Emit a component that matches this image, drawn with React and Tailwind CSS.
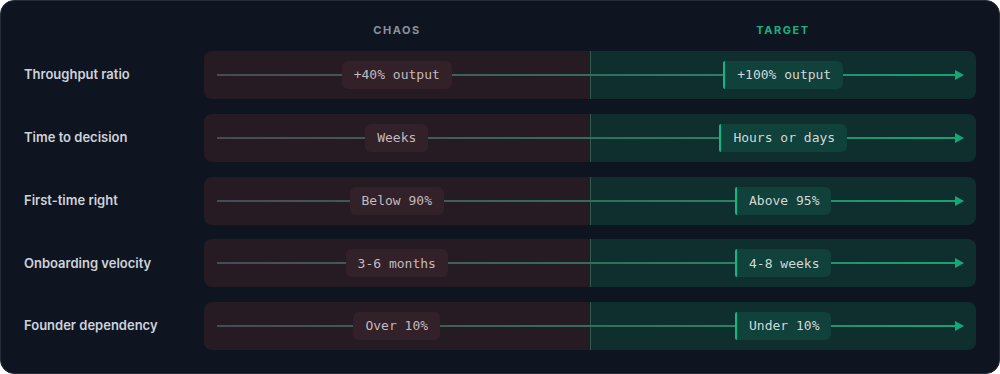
import React from 'react';

const rows = [
  { label: 'Throughput ratio', chaos: '+40% output', target: '+100% output' },
  { label: 'Time to decision', chaos: 'Weeks', target: 'Hours or days' },
  { label: 'First-time right', chaos: 'Below 90%', target: 'Above 95%' },
  { label: 'Onboarding velocity', chaos: '3-6 months', target: '4-8 weeks' },
  { label: 'Founder dependency', chaos: 'Over 10%', target: 'Under 10%' },
];

const mono = "font-['DejaVu_Sans_Mono','Liberation_Mono',monospace]";

const Row = ({ label, chaos, target }) => (
  <div className="grid h-12 grid-cols-[180px_1fr] items-center">
    <div className="text-[13px] font-semibold text-[#cdd2da]">{label}</div>
    <div className="relative flex h-full overflow-hidden rounded-lg">
      <div className="flex flex-1 items-center justify-center bg-[#261b22]" />
      <div className="flex flex-1 items-center justify-center border-l border-[#2c5a50] bg-[#0f2f2e]" />

      {/* track line + arrow */}
      <div className="absolute left-[13px] right-[16px] top-1/2 h-[2px] -translate-y-1/2 bg-gradient-to-r from-[#474b53] via-[#2f6e5c] to-[#12a474]" />
      <svg className="absolute right-[12px] top-1/2 -translate-y-1/2" width="9" height="10" viewBox="0 0 9 10">
        <path d="M0 0 L9 5 L0 10 Z" fill="#14a877" />
      </svg>

      <div className="absolute inset-0 flex">
        <div className="flex flex-1 items-center justify-center">
          <span className={`${mono} flex h-7 items-center rounded-md bg-[#33212a] px-3 text-[13px] text-[#c2babd]`}>
            {chaos}
          </span>
        </div>
        <div className="flex flex-1 items-center justify-center pl-px">
          <span className={`${mono} flex h-7 items-center rounded-l-[2px] rounded-r-md border-l-2 border-[#10b981] bg-[#10413a] px-3 text-[13px] text-[#d2d8d8]`}>
            {target}
          </span>
        </div>
      </div>
    </div>
  </div>
);

export default function App() {
  return (
    <div className="bg-white">
      <div className="h-[374px] w-[1000px] rounded-[14px] border border-[#262c38] bg-[#0f1520] px-[23px] pt-[21px] font-['Inter','Noto_Sans',sans-serif]">
        <div className="grid h-4 grid-cols-[180px_1fr_1fr] items-center text-[11px] font-bold tracking-[0.14em]">
          <div />
          <div className="text-center text-[#8a919c]">CHAOS</div>
          <div className="text-center text-[#14b37f]">TARGET</div>
        </div>
        <div className="mt-[13px] flex flex-col gap-[14.75px]">
          {rows.map((r) => (
            <Row key={r.label} {...r} />
          ))}
        </div>
      </div>
    </div>
  );
}
